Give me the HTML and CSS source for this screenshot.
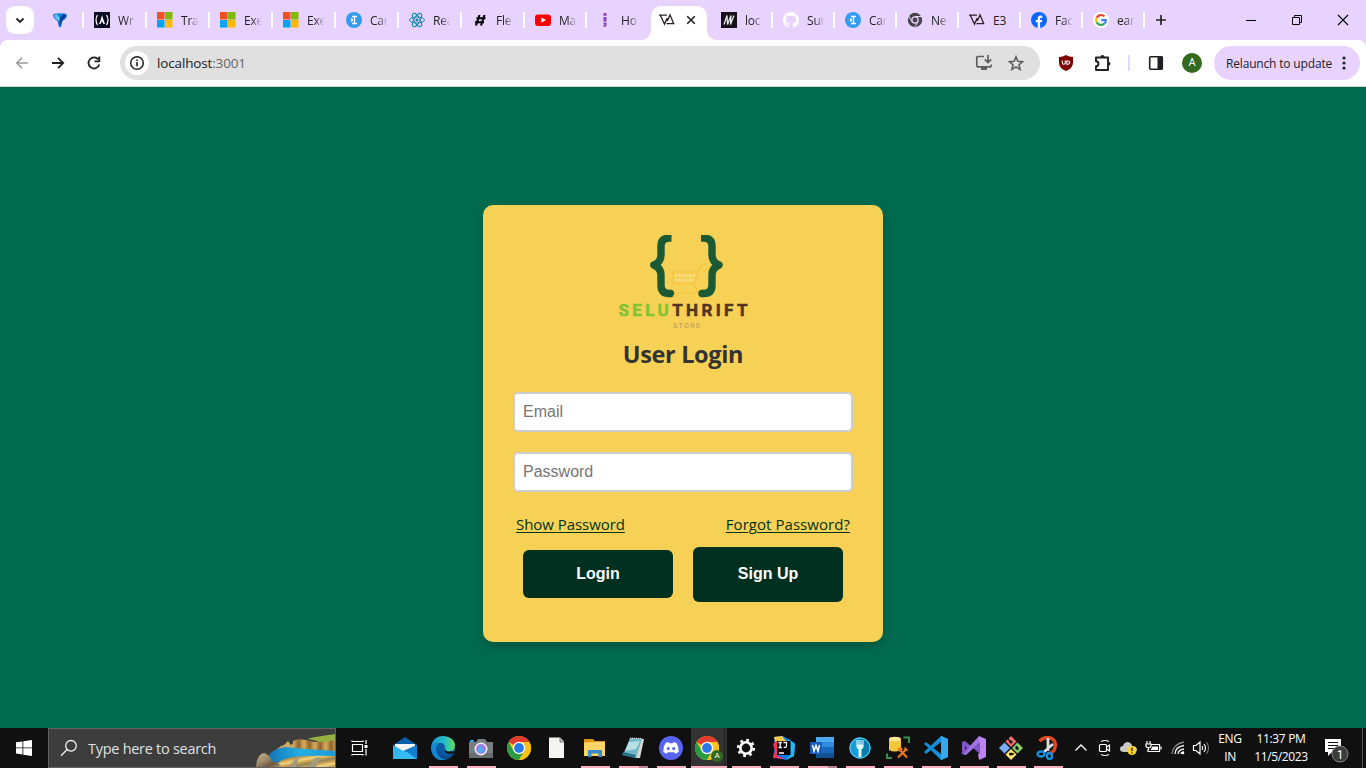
FILE: index.html
```html
<!DOCTYPE html>
<html lang="en">
<head>
<meta charset="utf-8">
<title>User Login</title>
<link rel="stylesheet" href="styles.css">
</head>
<body>
<svg class="defs" width="0" height="0">
  <symbol id="ms" viewBox="0 0 16 16"><path fill="#f25022" d="M0 0h7.500v7.500H0z"/><path fill="#7fba00" d="M8 0h7.500v7.500H8z"/><path fill="#00a4ef" d="M0 8h7.500v7.500H0z"/><path fill="#ffb900" d="M8 8h7.500v7.500H8z"/></symbol>
  <symbol id="career" viewBox="0 0 16 16"><circle cx="8" cy="8" r="8" fill="#349bf0"/><path d="M6 4.500h5M6 11.500h5M8.500 4.500v7M5 6.500L6.500 8 5 9.500" stroke="#fff" stroke-width="1.300" fill="none"/></symbol>
  <symbol id="va" viewBox="0 0 16 16"><path d="M0 3.200h8M1.300 3.200l4.200 8.900L8.300 6M7.500 11.700h7.200L11 2.800 8.300 9" fill="none" stroke="#2d2226" stroke-width="1.300"/></symbol>
  <symbol id="chrome" viewBox="0 0 24 24"><circle cx="12" cy="12" r="12" fill="#fbc116"/><path d="M12 12L1.600 6A12 12 0 0 1 22.400 6H12z" fill="#e33b2e"/><path d="M1.600 6A12 12 0 0 0 12 24L17.200 15 12 12 6.800 15z" fill="#299c46"/><path d="M12 24A12 12 0 0 0 22.400 6H12l5.200 9z" fill="#fbc116"/><circle cx="12" cy="12" r="6.200" fill="#fff"/><circle cx="12" cy="12" r="4.900" fill="#2878e8"/></symbol>
</svg>

<header class="tabstrip">
  <button class="tab-search"><svg width="12" height="12" viewBox="0 0 12 12"><path d="M2.500 4.500L6 8l3.500-3.500" fill="none" stroke="#202024" stroke-width="1.800"/></svg></button>
  <div class="tab pinned"><svg class="fav" viewBox="0 0 16 16"><path d="M1 4q0-2.500 3-2.500h8q3 0 3 2.500-1 3-4.500 5L9 15H7L5.500 9Q2 7 1 4z" fill="#0f6fd0"/><path d="M2 3.500Q3 2 5 2l3 4-1 3Q3 7 2 3.500z" fill="#5fc4f7"/><path d="M4.500 1.800h7L8 6z" fill="#1583de"/><path d="M8 6l4-4 2 1.500q-1 3-4.500 5L8.500 14H8z" fill="#063f92"/></svg></div>
  <div class="tab"><svg class="fav" viewBox="0 0 16 16"><path fill="#0a0a23" d="M0 0h16v16H0z"/><path d="M3.500 3Q.5 8 3.500 13M12.500 3q3 5 0 10" stroke="#fff" stroke-width="1.200" fill="none"/><path d="M8 3q1.500 5 3 9H9.500L8 9l-1.500 3H5Q7 8 8 3z" fill="#fff"/></svg><span>Wr</span></div>
  <div class="tab"><svg class="fav"><use href="#ms"/></svg><span>Tra</span></div>
  <div class="tab"><svg class="fav"><use href="#ms"/></svg><span>Exe</span></div>
  <div class="tab"><svg class="fav"><use href="#ms"/></svg><span>Exe</span></div>
  <div class="tab"><svg class="fav"><use href="#career"/></svg><span>Car</span></div>
  <div class="tab"><svg class="fav" viewBox="0 0 16 16"><g fill="none" stroke="#2189a9" stroke-width="1"><ellipse cx="8" cy="8" rx="7.500" ry="3"/><ellipse cx="8" cy="8" rx="7.500" ry="3" transform="rotate(60 8 8)"/><ellipse cx="8" cy="8" rx="7.500" ry="3" transform="rotate(120 8 8)"/></g><circle cx="8" cy="8" r="1.600" fill="#2189a9"/></svg><span>Rea</span></div>
  <div class="tab"><svg class="fav" viewBox="0 0 16 16"><path d="M7.500 3L4 13.500M12.500 3L9 13.500M4.500 6.200h9M3 10.200h9" stroke="#000" stroke-width="2.100"/></svg><span>Fle</span></div>
  <div class="tab narrow"><svg class="fav" viewBox="0 0 16 16"><rect y="2.500" width="16" height="11.500" rx="3" fill="#f00"/><path d="M6.300 5.500v5.200L11 8.100z" fill="#fff"/></svg><span>Ma</span></div>
  <div class="tab last-left"><svg class="fav" viewBox="0 0 16 16"><path d="M6.500 1h3v2.800h-3zM6.500 5h3v4.500h-3zM6.500 10.500h3v2.500q0 2-3 2v-1.500q1.300 0 1.300-1H6.500z" fill="#8b45be"/></svg><span>Ho</span></div>
  <div class="tab active"><svg class="fav"><use href="#va"/></svg><svg class="close" width="10" height="10" viewBox="0 0 10 10"><path d="M1.200 1.200l7.600 7.600M8.800 1.200L1.200 8.800" stroke="#222" stroke-width="1.600"/></svg></div>
  <div class="tab narrow first-right"><svg class="fav" viewBox="0 0 16 16"><path fill="#141119" d="M0 0h16v16H0z"/><path d="M3 12.500L6 3.500l.5 9 3.500-9-.5 9 3.500-9" stroke="#e5e5e5" stroke-width="1.300" fill="none"/></svg><span>loc</span></div>
  <div class="tab narrow"><svg class="fav" viewBox="0 0 16 16"><path fill="#fff" d="M8 0C3.580 0 0 3.580 0 8c0 3.540 2.290 6.530 5.470 7.590.4.070.55-.17.55-.38v-1.490c-2.010.37-2.530-.49-2.690-.94-.09-.23-.48-.94-.82-1.130-.28-.15-.68-.52-.01-.53.63-.01 1.080.58 1.230.82.72 1.210 1.870.87 2.330.66.070-.52.28-.87.51-1.070-1.780-.2-3.640-.89-3.640-3.950 0-.87.31-1.590.82-2.150-.08-.2-.36-1.020.08-2.120 0 0 .67-.21 2.200.82a7.500 7.500 0 0 1 4 0c1.530-1.040 2.200-.82 2.200-.82.44 1.100.16 1.920.08 2.120.51.56.82 1.270.82 2.150 0 3.070-1.870 3.750-3.650 3.950.29.250.54.73.54 1.480v2.200c0 .21.150.46.55.38A8 8 0 0 0 8 0z"/></svg><span>Sur</span></div>
  <div class="tab narrow"><svg class="fav"><use href="#career"/></svg><span>Car</span></div>
  <div class="tab narrow"><svg class="fav" viewBox="0 0 16 16"><circle cx="8" cy="8" r="7.200" fill="#46464c"/><path d="M8 4.500h7M5 9.800L1.500 3.800M11 9.800L7.800 15" stroke="#e8d3ff"/><circle cx="8" cy="8" r="3.100" fill="#46464c" stroke="#e8d3ff" stroke-width="1.300"/></svg><span>Ne</span></div>
  <div class="tab narrow"><svg class="fav"><use href="#va"/></svg><span class="full">E3</span></div>
  <div class="tab narrow"><svg class="fav" viewBox="0 0 16 16"><circle cx="8" cy="8" r="8" fill="#0866ff"/><path d="M6.700 16V10.300H4.700V8h2V6.500q0-3 3-3 1 0 1.700.2v2h-1.100q-1.200 0-1.200 1.200V8h2.200l-.4 2.300H9.100V16z" fill="#fff"/></svg><span>Fac</span></div>
  <div class="tab narrow"><svg class="fav" viewBox="0 0 16 16"><circle cx="8" cy="8" r="8" fill="#fff"/><g fill="none" stroke-width="2.200"><path d="M11.500 4.400A5 5 0 0 0 3.600 5.700" stroke="#ea4335"/><path d="M3.600 5.700a5 5 0 0 0 0 4.600" stroke="#fbbc05"/><path d="M3.600 10.300a5 5 0 0 0 7.700 1.400" stroke="#34a853"/><path d="M11.300 11.700Q13 10.500 13 8.100H8.200" stroke="#4285f4"/></g></svg><span>ear</span></div>
  <svg class="newtab" width="12" height="12" viewBox="0 0 12 12"><path d="M6 1v10M1 6h10" stroke="#222" stroke-width="1.700"/></svg>
  <div class="winbtns">
    <svg width="12" height="12" viewBox="0 0 12 12"><path d="M1 6.500h10" stroke="#000"/></svg>
    <svg width="12" height="12" viewBox="0 0 12 12"><path d="M1.500 3.500h7v7h-7zM3.500 3.500v-2h7v7h-2" fill="none" stroke="#000"/></svg>
    <svg width="12" height="12" viewBox="0 0 12 12"><path d="M1 1l10 10M11 1L1 11" stroke="#000" stroke-width="1.100"/></svg>
  </div>
</header>

<div class="toolbar-wrap"><nav class="toolbar">
  <div class="navbtns">
    <svg width="16" height="16" viewBox="0 0 16 16"><path d="M14 8H3M8 2.800L2.800 8 8 13.200" fill="none" stroke="#9b9b9b" stroke-width="1.600"/></svg>
    <svg width="16" height="16" viewBox="0 0 16 16"><path d="M2 8h11M8 2.800L13.200 8 8 13.200" fill="none" stroke="#202024" stroke-width="1.800"/></svg>
    <svg width="16" height="16" viewBox="0 0 16 16"><path d="M13.300 9.500A5.500 5.500 0 1 1 12.300 4.500M13.300 1.500v4.800H8.500" fill="none" stroke="#202024" stroke-width="1.800"/></svg>
  </div>
  <div class="omnibox">
    <div class="siteinfo"><svg width="16" height="16" viewBox="0 0 16 16"><circle cx="8" cy="8" r="6.300" fill="none" stroke="#222" stroke-width="1.500"/><path d="M8 7v4.300M8 4.500v1.600" stroke="#222" stroke-width="1.600"/></svg></div>
    <div class="url">localhost<span>:3001</span></div>
    <svg class="install" width="18" height="18" viewBox="0 0 18 18"><path d="M9 2.500H2.800q-1 0-1 1v8.300q0 1 1 1h12.400q1 0 1-1V10.500M13 1v7M9.800 5.300L13 8.500l3.200-3.200" fill="none" stroke="#5e5e5e" stroke-width="1.700"/><path d="M6 13h6v3H6z" fill="#5e5e5e"/></svg>
    <svg width="16" height="16" viewBox="0 0 16 16"><path d="M8 1.800l1.800 4.400 4.800.4-3.600 3.100 1.100 4.700L8 11.900l-4.100 2.500L5 9.700 1.400 6.600l4.800-.4z" fill="none" stroke="#5e5e5e" stroke-width="1.600"/></svg>
  </div>
  <div class="ext">
    <svg width="16" height="16" viewBox="0 0 16 16"><path d="M8 0q3 2 7 2v6q0 5-7 8-7-3-7-8V2q4 0 7-2z" fill="#800000"/><path d="M4.300 5.500v2.300q0 1.500 1.500 1.500T7.300 7.800V5.500M8.800 6h1.300q1.700 0 1.700 1.600T10.100 9.200H8.800z" stroke="#fff" stroke-width="1.100" fill="none"/></svg>
    <svg width="18" height="18" viewBox="0 0 18 18"><path d="M3 3.500h12v12.500H3v-3.700q2.500-.2 2.500-2.500T3 7.300z" fill="none" stroke="#202024" stroke-width="1.900" stroke-linejoin="round"/><path d="M7.500 3a2 2 0 0 1 4 0zM15.500 7.700a2 2 0 0 1 0 4z" fill="#202024"/></svg>
    <i></i>
    <svg width="16" height="16" viewBox="0 0 16 16"><rect x="1.700" y="1.700" width="12.600" height="12.600" rx="1" fill="none" stroke="#202024" stroke-width="1.600"/><path d="M9.500 1.500h5v13h-5z" fill="#202024"/></svg>
    <b>A</b>
  </div>
  <div class="relaunch"><span>Relaunch to update</span><svg width="4" height="16" viewBox="0 0 4 16"><g fill="#222"><circle cx="2" cy="3" r="1.600"/><circle cx="2" cy="8" r="1.600"/><circle cx="2" cy="13" r="1.600"/></g></svg></div>
</nav></div>

<main class="page">
  <form class="card">
    <svg class="logo" width="140" height="96" viewBox="0 0 140 96">
      <g fill="none" stroke="#1b5a35" stroke-width="7.400" stroke-linejoin="round"><path d="M58.500 3h-2q-8.500 0-8.500 8v9q0 7-7 10 7 3 7 10v10q0 8.500 8 8.500h2"/><path d="M88 3h2.500q8.500 0 8.500 8v9q0 7 7 10-7 3-7 10v10q0 8.500-8 8.500h-2"/></g>
      <g fill="#1b5a35"><circle cx="57.500" cy="58.500" r="3.700"/><circle cx="89" cy="58.500" r="3.700"/><circle cx="40.500" cy="30" r="3.200"/><circle cx="106" cy="30" r="3.200"/></g>
      <g fill="none" stroke="#f7c23f" stroke-width="1.200"><path d="M59 37h26l4-8h5M59 37l2 12h20l4-12M80 49l4 5q1 4-3 4H61M61 60v2M82 60v2"/><path d="M62 40.500h20M62 45h19" stroke="#f9e29a" stroke-width="2" stroke-dasharray="2 1.500"/></g>
      <text class="seluthrift" x="5.500" y="81" textLength="129" lengthAdjust="spacing"><tspan fill="#83c332" stroke="#83c332">SELU</tspan><tspan fill="#53341f" stroke="#53341f">THRIFT</tspan></text>
      <text class="store" x="60" y="92.500" textLength="27" fill="#b3975a">STORE</text>
    </svg>
    <h1>User Login</h1>
    <input type="text" placeholder="Email">
    <input type="text" placeholder="Password">
    <div class="links"><a>Show Password</a><a class="forgot">Forgot Password?</a></div>
    <div class="buttons"><button type="button" class="login">Login</button><button type="button" class="signup">Sign Up</button></div>
  </form>
</main>

<footer class="taskbar">
  <div class="start"><svg width="16" height="16" viewBox="0 0 16 16"><path fill="#fff" d="M0 2.300L6.500 1.400v6.100H0zM7.300 1.300L16 0v7.500H7.300zM0 8.300h6.500v6.200L0 13.600zM7.300 8.300H16V16l-8.700-1.300z"/></svg></div>
  <div class="search">
    <svg width="18" height="18" viewBox="0 0 18 18"><circle cx="11" cy="6.800" r="5.300" fill="none" stroke="#eee" stroke-width="1.300"/><path d="M7.200 10.600L1 16.800" stroke="#eee" stroke-width="1.400"/></svg>
    <span>Type here to search</span>
    <svg class="scene" width="80" height="38" viewBox="0 0 80 38">
      <defs><linearGradient id="rock" x2="1" y2="1"><stop stop-color="#c9b08a"/><stop offset=".4" stop-color="#a38c6c"/><stop offset=".7" stop-color="#6e5a44"/><stop offset="1" stop-color="#b89a6a"/></linearGradient><linearGradient id="cliff" x2=".13" spreadMethod="reflect"><stop stop-color="#d9ad58"/><stop offset="1" stop-color="#8c6432"/></linearGradient><linearGradient id="shore" x2=".22" y2=".2" spreadMethod="reflect"><stop stop-color="#efd381"/><stop offset=".6" stop-color="#c69a48"/><stop offset="1" stop-color="#8d8565"/></linearGradient><linearGradient id="sea"><stop stop-color="#1273b5"/><stop offset=".5" stop-color="#25aee0"/><stop offset="1" stop-color="#1c9cd6"/></linearGradient></defs>
      <path d="M22 20l4-3 3-1 4-4 3 4 3-2 2 6z" fill="#cda85f"/>
      <path d="M38 21V12l5-2 8 1 9 2 20-3v13H40z" fill="url(#cliff)"/>
      <path d="M52 10l8-2 7-1 13-2v6q-8 2-15 2-5-2-13-3z" fill="#93b13e"/>
      <path d="M12 33q0-12 18-15l22 2 28 2v6l-22 1-25 2-15 5z" fill="url(#sea)"/>
      <path d="M18 38l9-7 10-3q20-2 43-1v11z" fill="url(#shore)"/>
      <path d="M52 38l8-9 6-1-5 10zM34 38l6-8 4-1-3 9z" fill="#a49a7c"/>
      <path d="M1 38q1-13 8-14 5 1 8 8l5 1 5 5z" fill="url(#rock)"/>
    </svg>
  </div>
  <div class="taskview"><svg width="17" height="16" viewBox="0 0 17 16"><path d="M1.500 4.500h10v7h-10zM1 2V.5M1 1.500h11M12 2V.5M1 15.500V14M1 14.500h11M12 15.500V14M15 0v4M15 9v6.500" fill="none" stroke="#fff" stroke-width="1.200"/><path d="M13.500 5h3v3h-3z" fill="#fff"/></svg></div>
  <div class="apps">
    <div class="app"><svg viewBox="0 0 24 24"><path d="M0 9l12-8 12 8z" fill="#0860a8"/><path d="M2 8h20v10H2z" fill="#f3f3f3"/><path d="M0 9l12 7 12-7v14H0z" fill="#32b4ed"/><path d="M24 9v14L10 15z" fill="#127ccc"/><path d="M0 23l10-8 4 1 10 7z" fill="#36bdf4"/></svg></div>
    <div class="app run"><svg viewBox="0 0 24 24"><defs><linearGradient id="edge"><stop stop-color="#1994d2"/><stop offset=".6" stop-color="#25bfc5"/><stop offset="1" stop-color="#66df53"/></linearGradient></defs><circle cx="12" cy="12" r="12" fill="#0c59a4"/><path d="M0 11Q2 0 12 0q12 1 12 10-1 6-7 6-5-1-3-4Q14 6 7 7 2 7 0 13z" fill="url(#edge)"/><path d="M0 11q3-5 8-4-5 5-2 10 2 6 9 6Q6 27 1 17z" fill="#1686d2"/><path d="M14 12q-2 5 5 6 3 0 5-2-4-1-6-.5-4 0-4-3.500z" fill="#101010"/><path d="M8 14q1 8 14 5-5 6-11 3-4-3-3-8z" fill="#0d4b91"/></svg></div>
    <div class="app run"><svg viewBox="0 0 24 24"><path d="M1 4h4v2H1z" fill="#26a8ed"/><path d="M0 6h7l2-3h7l2 3h6v16H0z" fill="#777d82"/><path d="M0 17h24v5H0z" fill="#666c70"/><circle cx="12" cy="13" r="6.500" fill="#eee"/><circle cx="12" cy="13" r="5" fill="#aa79df"/><path d="M8 15a5 5 0 0 0 8 0l-5-6z" fill="#55a9ee"/></svg></div>
    <div class="app"><svg><use href="#chrome"/></svg></div>
    <div class="app"><svg viewBox="0 0 24 24"><path d="M4 1.500h11l4 4V22H4z" fill="#f4f4f2"/><path d="M15 1.500V6h4" fill="#c0c0c0" stroke="#777"/></svg></div>
    <div class="app run"><svg viewBox="0 0 24 24"><path d="M1 3h9l2 2h10v4H1z" fill="#dc9516"/><path d="M1 6.500L11 6h11v14H1z" fill="#ffd466"/><path d="M5 21v-7h14v7h-3.500v-3.500h-7V21z" fill="#388ecb"/></svg></div>
    <div class="app run split"><svg viewBox="0 0 24 24"><path d="M9 2l14 1-4 19h-4z" fill="#d9d9cf"/><path d="M9 2l12 .5-6 19.500-13-3z" fill="#70b7c7"/><path d="M8 6l11-1-4 8-11 2z" fill="#b6e0e5"/><path d="M2 16l13 3-1 3-13-3z" fill="#287185"/><path d="M9 2l12 .5" stroke="#eee" stroke-dasharray="1 1"/></svg></div>
    <div class="app run"><svg viewBox="0 0 24 24"><circle cx="12" cy="12" r="12" fill="#5865f2"/><path d="M6.500 7l3-1 .7 1.200h3.600l.7-1.200 3 1Q20 11 19.700 16l-3.400 1.800-1-1.600H8.700l-1 1.600L4.300 16Q4 11 6.500 7z" fill="#fff"/><circle cx="9.300" cy="12.500" r="1.600" fill="#5865f2"/><circle cx="14.700" cy="12.500" r="1.600" fill="#5865f2"/></svg></div>
    <div class="app current"><svg><use href="#chrome"/></svg><b>A</b></div>
    <div class="app run"><svg viewBox="0 0 24 24"><circle cx="12" cy="12" r="5.700" fill="none" stroke="#fff" stroke-width="2.600"/><circle cx="12" cy="12" r="7.800" fill="none" stroke="#fff" stroke-width="2.700" stroke-dasharray="2.700 3.426"/></svg></div>
    <div class="app run"><svg viewBox="0 0 24 24"><path d="M2 1l9-1 12 7-1 13-8 4-13-3 2-10z" fill="#087cf2"/><path d="M2 1l8-1 5 6-11 3z" fill="#ffcb45"/><path d="M1 8l5-4v16l7 3-12-1 2-7z" fill="#fb315d"/><path d="M16 3l7 5-1 12-8 4 5-6z" fill="#25b8ee"/><path d="M5 5h13.500v14H5z" fill="#080408"/><path d="M6.500 6.500h3.400M8.200 6.500v5M6.500 11.500h3.400M11.500 6.500h3v3.500q0 1.500-2.700 1.500M7 17h5" stroke="#fff" stroke-width="1.300" fill="none"/></svg></div>
    <div class="app run split"><svg viewBox="0 0 24 24"><path d="M6 1h18v21H6z" fill="#2e8de0"/><path d="M6 1h18v5H6z" fill="#4caaf0"/><path d="M6 11h18v6H6z" fill="#1869bd"/><path d="M6 17h18v5H6z" fill="#134f91"/><path d="M0 6h12v12H0z" fill="#185abd"/><path d="M2.500 9l1.500 6.200L6 9.500l2 5.700L9.500 9" fill="none" stroke="#fff" stroke-width="1.500"/></svg></div>
    <div class="app run"><svg viewBox="0 0 24 24"><circle cx="12" cy="12" r="10.700" fill="#159dda"/><path d="M12 1.500a10.500 10.500 0 0 1 0 21z" fill="#087cad"/><path d="M9 4v6.500q0 2 3 2t3-2V4M11 4v7M13 4v7" stroke="#e4f8ff" stroke-width="1.100" fill="none"/><path d="M9 8.500h6v2q0 2-1.500 2.500V21h-3v-8Q9 12.500 9 10.500z" fill="#e4f8ff"/><circle cx="12" cy="12" r="10" fill="none" stroke="#64d0ef"/></svg></div>
    <div class="app run"><svg viewBox="0 0 24 24"><path d="M3 3v11q5 3 12 0V3z" fill="#f3c83b"/><ellipse cx="9" cy="3" rx="6" ry="2.300" fill="#ffe691"/><path d="M17.500 1.500H23V7M1 17.500V22h5" fill="none" stroke="#39904a" stroke-width="2"/><path d="M13 13l8 8.500M20.500 13L12 21.500" stroke="#e87720" stroke-width="2.200"/><path d="M11 13l4-2 2 2-3 3zM19 10.500l-1 4 4.500.5z" fill="#e87720"/></svg></div>
    <div class="app run"><svg viewBox="0 0 24 24"><path d="M17 0l7 3v18l-7 3L2 9.500 0 8l2-2 15 12V6L2 18l-2-2z" fill="#168ed5"/><path d="M17 0l7 3v18l-7 3z" fill="#32a9ef"/></svg></div>
    <div class="app run slim"><svg viewBox="0 0 24 24"><path d="M0 6l3-1 15 13V6L3 19l-3-1z" fill="#8055c9"/><path d="M17 0l7 3v18l-7 3-1-6 2-1V7l-2-1z" fill="#bc82ef"/><path d="M17 0v7L4 19l-2-1 4-6z" fill="#a273e0"/><path d="M2 8v8l4-4z" fill="#101010" stroke="#8055c9" stroke-width="2"/></svg></div>
    <div class="app run slim"><svg viewBox="0 0 24 24"><path d="M12 0l5.500 5.500L12 11 6.500 5.500z" fill="#f16e6e"/><path d="M5.500 6.500L11 12l-5.500 5.500L0 12z" fill="#79adf3"/><path d="M18.500 6.500L24 12l-5.500 5.500L13 12z" fill="#88ce66"/><path d="M12 13l5.500 5.500L12 24l-5.500-5.500z" fill="#ffe374"/><path d="M8 2l4 4M10 18h5M17 10l2 4" stroke="#101010" stroke-width="1.500" fill="none"/><g fill="#101010"><circle cx="12" cy="6" r="1.600"/><circle cx="18" cy="12" r="1.600"/><circle cx="12" cy="18" r="1.600"/></g></svg></div>
    <div class="app run slim"><svg viewBox="0 0 24 24"><path d="M3.500 5q4-4 9-3.500 7 1 7 8-1 7-6 8" fill="none" stroke="#dc471d" stroke-width="3.400"/><path d="M12 2v13M17 8L8 16" stroke="#d9dde0" stroke-width="2.800"/><g fill="none" stroke="#1791dd" stroke-width="2.300"><ellipse cx="5" cy="18" rx="3.500" ry="2.500"/><ellipse cx="13.500" cy="20" rx="2.500" ry="3"/></g></svg></div>
  </div>
  <div class="tray">
    <svg width="14" height="14" viewBox="0 0 14 14"><path d="M1.500 9.500L7 4l5.500 5.500" fill="none" stroke="#fff" stroke-width="1.300"/></svg>
    <svg class="meet" width="14" height="18" viewBox="0 0 14 18"><g fill="none" stroke="#fff" stroke-width="1.200"><rect x="1.500" y="5.500" width="7" height="7" rx="1"/><path d="M8.500 8l3-2v6l-3-2M3 2.500q4-2 8 0M3 15.500q4 2 8 0"/></g></svg>
    <svg width="18" height="16" viewBox="0 0 18 16"><path d="M4 12q-4 0-4-3 0-3 3-3 1-4 5-4 4 1 4 4 5 0 5 4l-2 2z" fill="#c9c9c9"/><circle cx="12" cy="10.500" r="4.500" fill="#ffd426"/><path d="M12 7.500v3.700M12 12.200v1.300" stroke="#222" stroke-width="1.300"/></svg>
    <svg class="battery" width="18" height="16" viewBox="0 0 18 16"><path d="M7.500 4.500h8v7H4V9M3 1v3M6 1v3M2 4h5v2q0 1.500-2.500 1.500T2 6zM4.500 7.500V10M17 6.500v3" fill="none" stroke="#fff" stroke-width="1.200"/><path d="M8.500 6.500H14V10H6.500z" fill="#fff"/></svg>
    <svg width="16" height="16" viewBox="0 0 16 16"><g fill="none" stroke="#eee" stroke-width="1.300"><path d="M2 14Q3 4 14 2" stroke="#888"/><path d="M5 14Q5 7 14 5.500M8 14q0-4 6-5M11 14q0-2 3-2"/></g><circle cx="13" cy="13" r="1.300" fill="#fff"/></svg>
    <svg width="18" height="16" viewBox="0 0 18 16"><path d="M1.500 5.500h2.500L8 2v12l-4-3.500H1.500zM10 6q1.500 2 0 4M12 4q3 4 0 8" fill="none" stroke="#fff" stroke-width="1.200"/><path d="M14.500 2q4 6 0 12" fill="none" stroke="#888"/></svg>
  </div>
  <div class="lang">ENG<br>IN</div>
  <div class="clock">11:37 PM<br>11/5/2023</div>
  <div class="notif"><svg width="26" height="26" viewBox="0 0 26 26"><path d="M1 1h16v13H8l-4 4v-4H1z" fill="#fff"/><path d="M4 4.500h10M4 7.500h10M4 10.500h7" stroke="#111"/><circle cx="16" cy="16" r="8" fill="#3b3b3b" stroke="#858585"/><text x="12.700" y="20.500">1</text></svg></div>
  <div class="peek"></div>
</footer>
</body>
</html>
```

FILE: styles.css
```css
* { box-sizing: border-box; }
body { margin: 0; width: 1366px; height: 768px; overflow: hidden; display: flex; flex-direction: column; font-family: "Open Sans", "Noto Sans", sans-serif; }
svg { display: block; flex: none; }
.defs { position: absolute; }

.tabstrip { height: 40px; background: #e8d3ff; display: flex; align-items: center; font-size: 12px; letter-spacing: -0.2px; color: #222; }
.tab-search { width: 28px; height: 28px; margin: 0 6px; border: 0; padding: 0; border-radius: 9px; background: #fff; display: grid; place-items: center; }
.tab { width: 63px; height: 16px; padding-left: 10px; display: flex; align-items: center; gap: 8px; border-right: 2px solid #fff; }
.tab.pinned { width: 44px; padding-left: 12px; }
.tab.narrow { width: 62px; }
.tab.last-left { width: 64px; border-right: 0; }
.tab.active { position: relative; width: 56px; height: 34px; align-self: flex-end; padding: 0 0 6px 8px; gap: 11px; border: 0; border-radius: 10px 10px 0 0; background: #fff; }
.tab.active::before, .tab.active::after { content: ""; position: absolute; bottom: 0; width: 10px; height: 10px; }
.tab.active::before { left: -10px; background: radial-gradient(circle at 0 0, #e8d3ff 9.5px, #fff 10.5px); }
.tab.active::after { right: -10px; background: radial-gradient(circle at 100% 0, #e8d3ff 9.5px, #fff 10.5px); }
.tab.first-right { margin-left: 4px; }
.fav { width: 16px; height: 16px; }
.tab span { width: 17px; white-space: nowrap; line-height: 16px; padding-top: 1px; -webkit-mask-image: linear-gradient(90deg, #000 45%, transparent 105%); mask-image: linear-gradient(90deg, #000 45%, transparent 105%); }
.tab span.full { -webkit-mask-image: none; mask-image: none; }
.newtab { margin-left: 10px; }
.winbtns { margin-left: auto; display: flex; gap: 34px; padding-right: 17px; }

.toolbar-wrap { background: #e8d3ff; }
.toolbar { height: 47px; background: #fff; border-radius: 8px 8px 0 0; border-bottom: 1px solid #d3d3d3; display: flex; align-items: center; padding: 0 6px 0 14px; }
.navbtns { display: flex; gap: 20px; width: 106px; }
.omnibox { width: 920px; height: 34px; border-radius: 17px; background: #e0e0e0; display: flex; align-items: center; padding: 0 16px 0 5px; }
.siteinfo { width: 24px; height: 24px; border-radius: 50%; background: #fff; display: grid; place-items: center; }
.url { margin-left: 8px; font-size: 13.5px; letter-spacing: -0.15px; color: #222; flex: 1; padding-bottom: 1px; }
.url span { color: #666; }
.install { margin-right: 15px; }
.ext { display: flex; align-items: center; margin-left: 18px; flex: 1; }
.ext svg:nth-child(2) { margin-left: 19px; }
.ext i { width: 2px; height: 16px; margin: 0 18px 0 17px; background: #e8d3ff; }
.ext b { width: 20px; height: 20px; margin-left: 18px; border-radius: 50%; background: #33691e; color: #fff; font: 11px/20px Roboto, sans-serif; text-align: center; }
.relaunch { width: 146px; height: 34px; border-radius: 17px; background: #e8d3ff; display: flex; align-items: center; justify-content: space-between; padding: 0 14px 0 12px; font-size: 12px; font-weight: 500; letter-spacing: -0.17px; color: #222; white-space: nowrap; }

.page { flex: 1; background: #006a4e; display: flex; justify-content: center; align-items: flex-start; padding-top: 118px; }
.card { width: 400px; height: 437px; padding: 30px; border-radius: 10px; background: #f6d155; box-shadow: 0 4px 8px rgba(0,0,0,.2); display: flex; flex-direction: column; align-items: center; }
.logo { margin-bottom: 4px; }
.seluthrift { font: bold 17px Roboto, sans-serif; stroke-width: .5px; }
.store { font: 7px Roboto, sans-serif; }
.card h1 { margin: 0 0 18px; font-size: 23.5px; line-height: 39px; font-weight: 700; color: #333; letter-spacing: -0.35px; white-space: nowrap; }
.card input { width: 340px; height: 40px; flex: none; margin-bottom: 20px; border: 2px solid #ccc; border-radius: 5px; padding: 8px; background: #fff; font: 16px "Liberation Sans", Arial, sans-serif; }
.links { width: 334px; height: 24px; display: flex; justify-content: space-between; font-size: 15px; line-height: 24px; letter-spacing: -0.05px; color: #013220; }
.links a { text-decoration: underline; text-underline-offset: 2px; text-decoration-thickness: 1px; white-space: nowrap; }
.links .forgot { letter-spacing: 0.05px; }
.buttons { display: flex; align-items: flex-start; gap: 20px; margin-top: 11px; }
.buttons button { width: 150px; border: 0; border-radius: 6px; background: #013020; color: #fff; font: bold 16px "Liberation Sans", Arial, sans-serif; padding: 0; }
.buttons .login { height: 48px; margin-top: 3px; }
.buttons .signup { height: 55px; padding-bottom: 2px; }

.taskbar { height: 40px; background: #101010; display: flex; align-items: stretch; color: #fff; }
.start { width: 48px; display: grid; place-items: center; }
.search { width: 288px; background: #3d3d3d; border: 1px solid #626262; display: flex; align-items: center; padding-left: 11px; }
.search span { margin-left: 10px; flex: 1; font-size: 14.5px; letter-spacing: -0.28px; color: #e0e0e0; white-space: nowrap; }
.scene { align-self: flex-end; margin-left: -10px; }
.taskview { width: 50px; padding-left: 15px; display: flex; align-items: center; }
.apps { display: flex; width: 681px; }
.app { position: relative; width: 38px; flex: none; display: grid; place-items: center; }
.app.slim { width: 37px; }
.app > svg { width: 24px; height: 24px; }
.app.run::after { content: ""; position: absolute; left: 5px; bottom: 0; width: 29px; height: 2px; background: #ffb0c0; }
.app.split::after { background: linear-gradient(90deg, #ffb0c0 20px, #b98290 20px); }
.app.current { background: linear-gradient(90deg, #333 33px, #202020 33px, #202020 34px, #303030 34px); border-bottom: 2px solid #ffb0c0; width: 36px; margin: 0 0 0 1px; padding: 2px 4px 0 0; }
.app.current b { position: absolute; right: 4px; bottom: 4px; width: 12px; height: 12px; border-radius: 50%; background: #33691e; font: 8px/12px Roboto, sans-serif; text-align: center; }
.tray { width: 144px; padding-left: 7px; display: flex; align-items: center; gap: 8px; }
.meet { margin-left: 2px; }
.battery { margin-left: -2px; }
.tray svg:last-child { margin-left: -2px; }
.lang, .clock { font-size: 12px; line-height: 18px; text-align: center; padding-top: 2px; letter-spacing: -0.35px; white-space: nowrap; }
.lang { width: 38px; }
.clock { width: 64px; }
.notif { margin-left: 11px; padding-top: 10px; width: 38px; }
.notif text { font: 12px Roboto, sans-serif; fill: #fff; }
.peek { border-left: 1px solid #555; }
```
